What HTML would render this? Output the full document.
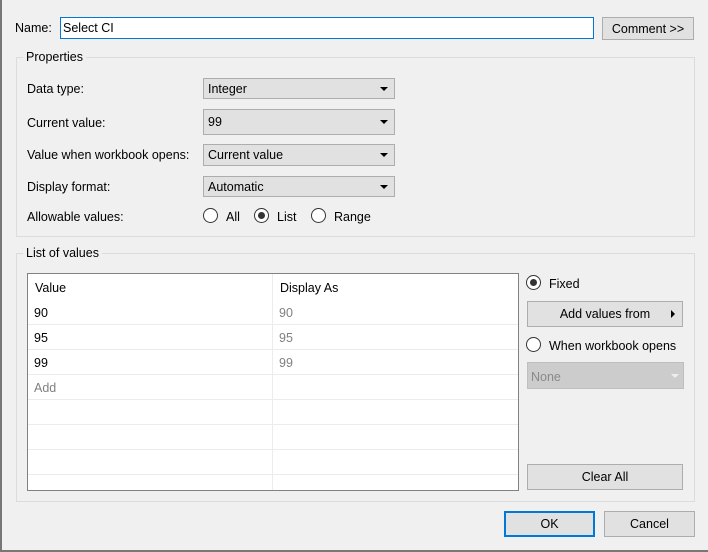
<!DOCTYPE html>
<html><head><style>
*{margin:0;padding:0;box-sizing:border-box}
body{width:708px;height:552px;background:#f0f0f0;font-family:"Liberation Sans",sans-serif;font-size:12.5px;color:#000;position:relative;overflow:hidden}
.a{position:absolute}
.t{position:absolute;white-space:nowrap;line-height:14px}
.grp{position:absolute;border:1px solid #dcdcdc}
.leg{position:absolute;background:#f0f0f0;padding:0 3px;line-height:14px}
.dd{position:absolute;background:#e1e1e1;border:1px solid #adadad;padding-left:4px;display:flex;align-items:center}
.dd:after{content:"";position:absolute;right:6px;top:50%;margin-top:-2px;border-left:4px solid transparent;border-right:4px solid transparent;border-top:4px solid #000}
.btn{position:absolute;background:#e1e1e1;border:1px solid #adadad;display:flex;align-items:center;justify-content:center}
.rad{position:absolute;width:15px;height:15px;border:1px solid #333;border-radius:50%;background:#fff}
.rad.on:after{content:"";position:absolute;left:3px;top:3px;width:7px;height:7px;border-radius:50%;background:#333}
.hl{position:absolute;left:0;width:100%;height:1px;background:#ececec}
</style></head><body>
<div class="a" style="left:0;top:0;width:2px;height:552px;background:#777"></div>
<div class="a" style="left:0;top:550px;width:708px;height:2px;background:#777"></div>

<div class="t" style="left:15px;top:21px">Name:</div>
<div class="a" style="left:60px;top:17px;width:534px;height:22px;background:#fff;border:1px solid #0078d7"></div>
<div class="t" style="left:63px;top:21px">Select CI</div>
<div class="btn" style="left:602px;top:17px;width:92px;height:23px">Comment &gt;&gt;</div>

<div class="grp" style="left:16px;top:57px;width:679px;height:180px"></div>
<div class="leg" style="left:23px;top:50px">Properties</div>
<div class="t" style="left:27px;top:82px">Data type:</div>
<div class="dd" style="left:203px;top:78px;width:192px;height:21px">Integer</div>
<div class="t" style="left:27px;top:116px">Current value:</div>
<div class="dd" style="left:203px;top:109px;width:192px;height:26px">99</div>
<div class="t" style="left:27px;top:148px">Value when workbook opens:</div>
<div class="dd" style="left:203px;top:144px;width:192px;height:22px">Current value</div>
<div class="t" style="left:27px;top:180px">Display format:</div>
<div class="dd" style="left:203px;top:176px;width:192px;height:21px">Automatic</div>
<div class="t" style="left:27px;top:210px">Allowable values:</div>
<div class="rad" style="left:203px;top:208px"></div><div class="t" style="left:226px;top:210px">All</div>
<div class="rad on" style="left:254px;top:208px"></div><div class="t" style="left:277px;top:210px">List</div>
<div class="rad" style="left:311px;top:208px"></div><div class="t" style="left:334px;top:210px">Range</div>

<div class="grp" style="left:16px;top:253px;width:679px;height:249px"></div>
<div class="leg" style="left:23px;top:246px">List of values</div>
<div class="a" style="left:27px;top:273px;width:492px;height:218px;background:#fff;border:1px solid #828282">
 <div class="a" style="left:244px;top:0;width:1px;height:216px;background:#ececec"></div>
 <div class="hl" style="top:50px"></div><div class="hl" style="top:75px"></div><div class="hl" style="top:100px"></div><div class="hl" style="top:125px"></div><div class="hl" style="top:150px"></div><div class="hl" style="top:175px"></div><div class="hl" style="top:200px"></div>
 <div class="t" style="left:7px;top:7px">Value</div><div class="t" style="left:252px;top:7px">Display As</div>
 <div class="t" style="left:6px;top:32px">90</div><div class="t" style="left:251px;top:32px;color:#808080">90</div>
 <div class="t" style="left:6px;top:57px">95</div><div class="t" style="left:251px;top:57px;color:#808080">95</div>
 <div class="t" style="left:6px;top:82px">99</div><div class="t" style="left:251px;top:82px;color:#808080">99</div>
 <div class="t" style="left:6px;top:107px;color:#808080">Add</div>
</div>
<div class="rad on" style="left:526px;top:275px"></div><div class="t" style="left:549px;top:277px">Fixed</div>
<div class="btn" style="left:527px;top:301px;width:156px;height:26px">Add values from</div>
<div class="a" style="left:671px;top:310px;border-top:4px solid transparent;border-bottom:4px solid transparent;border-left:4px solid #000"></div>
<div class="rad" style="left:526px;top:337px"></div><div class="t" style="left:549px;top:339px">When workbook opens</div>
<div class="a" style="left:527px;top:362px;width:157px;height:27px;background:#cccccc;border:1px solid #bfbfbf"></div>
<div class="t" style="left:531px;top:370px;color:#8a8a8a">None</div>
<div class="a" style="left:671px;top:374px;border-left:4px solid transparent;border-right:4px solid transparent;border-top:4px solid #eee"></div>
<div class="btn" style="left:527px;top:464px;width:156px;height:26px">Clear All</div>

<div class="btn" style="left:504px;top:511px;width:91px;height:26px;border:2px solid #0078d7">OK</div>
<div class="btn" style="left:604px;top:511px;width:91px;height:26px">Cancel</div>
</body></html>
